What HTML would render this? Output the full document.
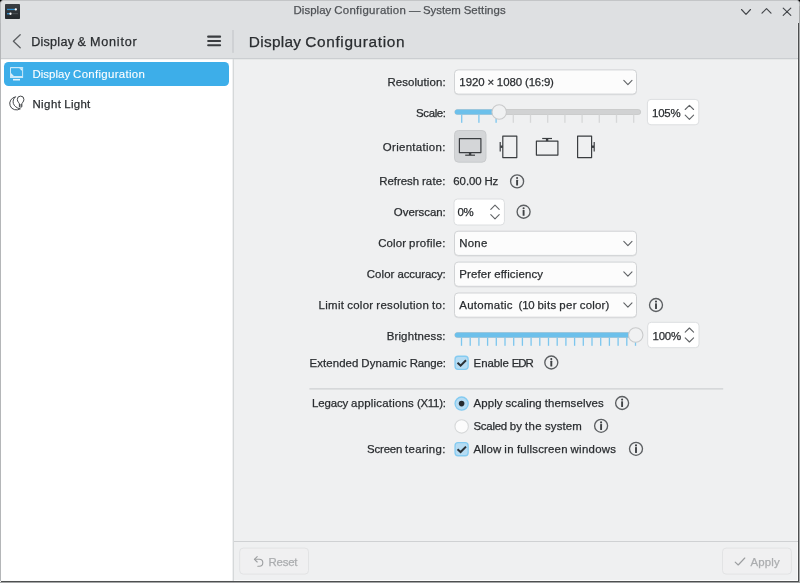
<!DOCTYPE html>
<html><head><meta charset="utf-8"><title>Display Configuration — System Settings</title>
<style>
*{box-sizing:border-box;margin:0;padding:0}
html,body{width:800px;height:583px;overflow:hidden;background:#000}
body{font-family:"Liberation Sans",sans-serif;font-size:11.4px;color:#2a2d30;position:relative}
.abs{position:absolute}
#win{position:absolute;left:0;top:0;width:800px;height:583px;overflow:hidden;will-change:transform}
#titlebar{position:absolute;left:0;top:0;width:800px;height:30px;background:#dee0e2;border:1px solid #c3c5c7;border-left-color:#b8babc;border-right-color:#b8babc;border-radius:3.5px 3.5px 0 0}
#body{position:absolute;left:0;top:23px;width:800px;height:560px;background:#eff0f1}
#toolbar{position:absolute;left:1px;top:23px;width:797px;height:35px;background:#dee0e2}
#tbsep{position:absolute;left:1px;top:58px;width:797px;height:1px;background:#c5c7c9}
#sidebar{position:absolute;left:1px;top:59px;width:232px;height:522px;background:#fff}
#vsep{position:absolute;left:233px;top:59px;width:1px;height:522px;background:#cdcfd1}
#tbvsep{position:absolute;left:233px;top:30px;width:1px;height:23px;background:#c2c4c7}
.t{position:absolute;white-space:nowrap;line-height:16px;-webkit-text-stroke:0.25px}
.w{position:absolute;top:0;left:0;white-space:pre}
.box{position:absolute;background:#fcfcfc;border:1px solid #cfd1d3;border-radius:4px;box-shadow:0 1px 0 rgba(0,0,0,0.06)}
.sp{background:#fff;border-color:#dadcde}
.dis{background:#f0f0f1;border-color:#e3e4e5;box-shadow:none}
#sel{position:absolute;left:4px;top:62px;width:225px;height:24px;background:#3daee9;border-radius:4.5px}
</style></head><body>
<div id="win">
<div id="titlebar"></div>
<div id="body"></div>
<div id="toolbar"></div>
<div id="sidebar"></div>
<div class="abs" style="left:0;top:23px;width:1px;height:558px;background:#b4b6b8"></div>
<div class="abs" style="left:797px;top:59px;width:1px;height:522px;background:#fafafa"></div>
<div class="abs" style="left:797px;top:23px;width:1px;height:36px;background:#e8e9ea"></div>
<div class="abs" style="left:798px;top:23px;width:1px;height:559px;background:#4d4f50"></div>
<div class="abs" style="left:799px;top:6px;width:1px;height:577px;background:#a9abac"></div>
<div class="abs" style="left:1px;top:580px;width:797px;height:1px;background:#fcfcfc"></div>
<div class="abs" style="left:1px;top:581px;width:798px;height:1px;background:#4d4f50"></div>
<div class="abs" style="left:0;top:582px;width:800px;height:1px;background:#a3a5a6"></div>
<div id="sel"></div>
<div class="abs" style="left:234px;top:541px;width:564px;height:1px;background:#cfd1d3"></div>
<svg class="abs" style="left:0;top:0" width="800" height="583" viewBox="0 0 800 583"><rect x="454.5" y="70.60000000000001" width="182.0" height="24.2" rx="3.6" fill="none" stroke="#000" stroke-opacity="0.07" stroke-width="1"/><rect x="454.5" y="69.9" width="182.0" height="24.2" rx="3.6" fill="#fcfcfc" stroke="#d1d3d5" stroke-width="1"/>
<rect x="454.5" y="231.89999999999998" width="182.0" height="24.2" rx="3.6" fill="none" stroke="#000" stroke-opacity="0.07" stroke-width="1"/><rect x="454.5" y="231.2" width="182.0" height="24.2" rx="3.6" fill="#fcfcfc" stroke="#d1d3d5" stroke-width="1"/>
<rect x="454.5" y="262.8" width="182.0" height="24.2" rx="3.6" fill="none" stroke="#000" stroke-opacity="0.07" stroke-width="1"/><rect x="454.5" y="262.1" width="182.0" height="24.2" rx="3.6" fill="#fcfcfc" stroke="#d1d3d5" stroke-width="1"/>
<rect x="454.5" y="293.7" width="182.0" height="24.2" rx="3.6" fill="none" stroke="#000" stroke-opacity="0.07" stroke-width="1"/><rect x="454.5" y="293.0" width="182.0" height="24.2" rx="3.6" fill="#fcfcfc" stroke="#d1d3d5" stroke-width="1"/>
<rect x="647.4" y="99.4" width="51.4" height="25.4" rx="3.6" fill="#fff" stroke="#dcdee0" stroke-width="1"/>
<rect x="454.0" y="199.0" width="50.4" height="26.0" rx="3.6" fill="#fff" stroke="#dcdee0" stroke-width="1"/>
<rect x="647.7" y="322.3" width="51.3" height="25.4" rx="3.6" fill="#fff" stroke="#dcdee0" stroke-width="1"/>
<rect x="239.7" y="548.1" width="68.8" height="26.0" rx="3.6" fill="#f0f0f1" stroke="#e2e3e4" stroke-width="1"/>
<rect x="722.5" y="548.1" width="68.9" height="26.0" rx="3.6" fill="#f0f0f1" stroke="#e2e3e4" stroke-width="1"/>
<rect x="309.4" y="388.4" width="413.8" height="1" fill="#c6c8ca"/>
<rect x="1" y="58.2" width="797" height="1" fill="#c3c6c9"/>
<rect x="232.7" y="59.2" width="1" height="521.8" fill="#cbcdcf"/>
<rect x="232.5" y="30" width="1" height="22.8" fill="#bfc2c5"/></svg>
<div class="t" style="left:293.53px;top:2.34px;font-size:11.43px;width:214.3px;height:16px;color:#4f5256"><span class="w" style="left:0.00px;letter-spacing:0.056px">Display</span> <span class="w" style="left:40.73px;letter-spacing:0.309px">Configuration</span> <span class="w" style="left:115.58px;letter-spacing:-0.312px">—</span> <span class="w" style="left:129.55px;letter-spacing:-0.065px">System</span> <span class="w" style="left:170.12px;letter-spacing:0.117px">Settings</span></div>
<div class="t" style="left:31.20px;top:34.13px;font-size:12.62px;width:108.3px;height:16px"><span class="w" style="left:0.00px;letter-spacing:0.237px">Display</span> <span class="w" style="left:46.30px;letter-spacing:0.812px">&amp;</span> <span class="w" style="left:58.81px;letter-spacing:0.779px">Monitor</span></div>
<div class="t" style="left:248.80px;top:34.36px;font-size:15.4px;width:158.3px;height:16px"><span class="w" style="left:0.00px;letter-spacing:0.29px">Display</span> <span class="w" style="left:56.50px;letter-spacing:0.636px">Configuration</span></div>
<div class="t" style="left:32.40px;top:66.34px;font-size:11.43px;width:114.7px;height:16px;color:#fff;-webkit-text-stroke:0.1px"><span class="w" style="left:0.00px;letter-spacing:0.056px">Display</span> <span class="w" style="left:40.73px;letter-spacing:0.309px">Configuration</span></div>
<div class="t" style="left:32.40px;top:95.54px;font-size:11.43px;width:60.2px;height:16px"><span class="w" style="left:0.00px;letter-spacing:0.463px">Night</span> <span class="w" style="left:31.88px;letter-spacing:0.316px">Light</span></div>
<div class="t" style="left:387.39px;top:74.24px;font-size:11.43px;width:60.3px;height:16px"><span class="w" style="left:0.00px;letter-spacing:0.105px">Resolution:</span></div>
<div class="t" style="left:459.30px;top:74.24px;font-size:11.43px;width:96.4px;height:16px"><span class="w" style="left:0.00px;letter-spacing:-0.008px">1920</span> <span class="w" style="left:28.28px;letter-spacing:-0.312px">×</span> <span class="w" style="left:37.50px;letter-spacing:-0.008px">1080</span> <span class="w" style="left:65.77px;letter-spacing:-0.195px">(16:9)</span></div>
<div class="t" style="left:415.97px;top:104.64px;font-size:11.43px;width:31.7px;height:16px"><span class="w" style="left:0.00px;letter-spacing:-0.336px">Scale:</span></div>
<div class="t" style="left:652.10px;top:104.64px;font-size:11.43px;width:30.3px;height:16px"><span class="w" style="left:0.00px;letter-spacing:-0.238px">105%</span></div>
<div class="t" style="left:382.84px;top:138.64px;font-size:11.43px;width:64.9px;height:16px"><span class="w" style="left:0.00px;letter-spacing:0.318px">Orientation:</span></div>
<div class="t" style="left:379.23px;top:173.04px;font-size:11.43px;width:68.5px;height:16px"><span class="w" style="left:0.00px;letter-spacing:-0.033px">Refresh</span> <span class="w" style="left:42.66px;letter-spacing:0.194px">rate:</span></div>
<div class="t" style="left:453.30px;top:173.04px;font-size:11.43px;width:46.7px;height:16px"><span class="w" style="left:0.00px;letter-spacing:-0.047px">60.00</span> <span class="w" style="left:31.25px;letter-spacing:-0.266px">Hz</span></div>
<div class="t" style="left:393.86px;top:204.04px;font-size:11.43px;width:53.8px;height:16px"><span class="w" style="left:0.00px;letter-spacing:-0.024px">Overscan:</span></div>
<div class="t" style="left:457.50px;top:204.04px;font-size:11.43px;width:17.6px;height:16px"><span class="w" style="left:0.00px;letter-spacing:-0.469px">0%</span></div>
<div class="t" style="left:378.26px;top:235.24px;font-size:11.43px;width:69.4px;height:16px"><span class="w" style="left:0.00px;letter-spacing:0.119px">Color</span> <span class="w" style="left:30.77px;letter-spacing:0.297px">profile:</span></div>
<div class="t" style="left:459.30px;top:235.24px;font-size:11.43px;width:30.3px;height:16px"><span class="w" style="left:0.00px;letter-spacing:0.238px">None</span></div>
<div class="t" style="left:366.65px;top:266.14px;font-size:11.43px;width:81.0px;height:16px"><span class="w" style="left:0.00px;letter-spacing:0.119px">Color</span> <span class="w" style="left:30.77px;letter-spacing:-0.068px">accuracy:</span></div>
<div class="t" style="left:459.30px;top:266.14px;font-size:11.43px;width:85.9px;height:16px"><span class="w" style="left:0.00px;letter-spacing:0.146px">Prefer</span> <span class="w" style="left:34.88px;letter-spacing:0.164px">efficiency</span></div>
<div class="t" style="left:318.45px;top:297.14px;font-size:11.43px;width:129.2px;height:16px"><span class="w" style="left:0.00px;letter-spacing:0.359px">Limit</span> <span class="w" style="left:28.81px;letter-spacing:0.287px">color</span> <span class="w" style="left:57.89px;letter-spacing:0.327px">resolution</span> <span class="w" style="left:113.56px;letter-spacing:0.333px">to:</span></div>
<div class="t" style="left:459.30px;top:297.14px;font-size:11.43px;width:152.1px;height:16px"><span class="w" style="left:0.00px;letter-spacing:0.295px">Automatic</span> <span class="w" style="left:59.23px;letter-spacing:-0.161px">(10</span> <span class="w" style="left:78.12px;letter-spacing:0.309px">bits</span> <span class="w" style="left:100.02px;letter-spacing:0.385px">per</span> <span class="w" style="left:120.56px;letter-spacing:0.161px">color)</span></div>
<div class="t" style="left:386.64px;top:327.54px;font-size:11.43px;width:61.1px;height:16px"><span class="w" style="left:0.00px;letter-spacing:0.175px">Brightness:</span></div>
<div class="t" style="left:652.60px;top:327.54px;font-size:11.43px;width:30.3px;height:16px"><span class="w" style="left:0.00px;letter-spacing:-0.238px">100%</span></div>
<div class="t" style="left:309.43px;top:355.04px;font-size:11.43px;width:138.3px;height:16px"><span class="w" style="left:0.00px;letter-spacing:0.1px">Extended</span> <span class="w" style="left:51.95px;letter-spacing:0.138px">Dynamic</span> <span class="w" style="left:100.23px;letter-spacing:-0.133px">Range:</span></div>
<div class="t" style="left:473.60px;top:355.04px;font-size:11.43px;width:61.2px;height:16px"><span class="w" style="left:0.00px;letter-spacing:-0.062px">Enable</span> <span class="w" style="left:38.08px;letter-spacing:-0.984px">EDR</span></div>
<div class="t" style="left:312.11px;top:395.24px;font-size:11.43px;width:135.6px;height:16px"><span class="w" style="left:0.00px;letter-spacing:-0.122px">Legacy</span> <span class="w" style="left:38.98px;letter-spacing:0.215px">applications</span> <span class="w" style="left:104.77px;letter-spacing:-0.24px">(X11):</span></div>
<div class="t" style="left:473.40px;top:395.24px;font-size:11.43px;width:132.4px;height:16px"><span class="w" style="left:0.00px;letter-spacing:0.138px">Apply</span> <span class="w" style="left:32.14px;letter-spacing:0.103px">scaling</span> <span class="w" style="left:71.30px;letter-spacing:0.136px">themselves</span></div>
<div class="t" style="left:473.40px;top:418.04px;font-size:11.43px;width:110.5px;height:16px"><span class="w" style="left:0.00px;letter-spacing:-0.224px">Scaled</span> <span class="w" style="left:36.47px;letter-spacing:0.094px">by</span> <span class="w" style="left:51.61px;letter-spacing:0.411px">the</span> <span class="w" style="left:71.62px;letter-spacing:0.122px">system</span></div>
<div class="t" style="left:367.07px;top:441.44px;font-size:11.43px;width:80.6px;height:16px"><span class="w" style="left:0.00px;letter-spacing:-0.174px">Screen</span> <span class="w" style="left:38.03px;letter-spacing:0.311px">tearing:</span></div>
<div class="t" style="left:473.40px;top:441.44px;font-size:11.43px;width:145.0px;height:16px"><span class="w" style="left:0.00px;letter-spacing:0.147px">Allow</span> <span class="w" style="left:30.92px;letter-spacing:0.414px">in</span> <span class="w" style="left:43.52px;letter-spacing:0.188px">fullscreen</span> <span class="w" style="left:97.17px;letter-spacing:0.283px">windows</span></div>
<div class="t" style="left:268.50px;top:553.84px;font-size:11.43px;width:30.7px;height:16px;color:#abadaf"><span class="w" style="left:0.00px;letter-spacing:-0.222px">Reset</span></div>
<div class="t" style="left:750.60px;top:553.84px;font-size:11.43px;width:31.3px;height:16px;color:#abadaf"><span class="w" style="left:0.00px;letter-spacing:0.138px">Apply</span></div>
<svg class="abs" style="left:0;top:0" width="800" height="583" viewBox="0 0 800 583"><defs><linearGradient id="ig" x1="0" y1="0" x2="0" y2="1"><stop offset="0" stop-color="#3a3f44"/><stop offset="1" stop-color="#25292d"/></linearGradient></defs>
<rect x="5" y="4" width="15" height="15" rx="0.8" fill="url(#ig)"/>
<rect x="7" y="8.8" width="8.5" height="1.3" fill="#2f8fd0"/><circle cx="15.8" cy="9.45" r="1.15" fill="#fff"/>
<rect x="7" y="13.1" width="3" height="1.3" fill="#2f8fd0"/><circle cx="10.5" cy="13.75" r="1.15" fill="#fff"/><rect x="12.3" y="13.4" width="5.7" height="0.7" fill="#5a5f64"/>
<path d="M741.50 9.50 L746.00 14.30 L750.50 9.50" fill="none" stroke="#43464a" stroke-width="1.15" stroke-linecap="round" stroke-linejoin="round"/>
<path d="M762.00 13.20 L766.50 8.60 L771.00 13.20" fill="none" stroke="#43464a" stroke-width="1.15" stroke-linecap="round" stroke-linejoin="round"/>
<path d="M783.2 8.2 L790.8 15.3 M790.8 8.2 L783.2 15.3" stroke="#43464a" stroke-width="1.15" fill="none" stroke-linecap="round"/>
<path d="M20.2 34.8 L13.4 41.3 L20.2 47.8" fill="none" stroke="#5c5f62" stroke-width="1.3" stroke-linecap="round" stroke-linejoin="round"/>
<rect x="207.1" y="35.550000000000004" width="14" height="2.1" rx="1" fill="#3a3d40"/>
<rect x="207.1" y="39.95" width="14" height="2.1" rx="1" fill="#3a3d40"/>
<rect x="207.1" y="44.25" width="14" height="2.1" rx="1" fill="#3a3d40"/>
<rect x="10" y="67.1" width="13.1" height="11" rx="0.4" fill="#fff" fill-opacity="0.72"/>
<rect x="11" y="68.2" width="11.1" height="7.8" fill="#3daee9"/>
<path d="M19.2 68.2 L22.1 68.2 L22.1 71.1 Z M11 73.1 L13.9 76 L11 76 Z" fill="#fff" fill-opacity="0.8"/>
<rect x="13" y="78.9" width="7" height="1.6" fill="#fff" fill-opacity="0.85"/>
<g fill="none" stroke="#3a3d40" stroke-width="0.95" stroke-linecap="round" stroke-linejoin="round"><path d="M15.3 96.9 A6.6 6.6 0 1 0 20.0 108.9"/><path d="M15.3 96.9 C11.2 100.5 12.5 107.0 20.0 108.9"/><path d="M19.4 106.6 V103.9 C19.4 102.9 17.3 101.9 17.3 99.4 A3.3 3.3 0 0 1 23.9 99.4 C23.9 101.9 21.8 102.9 21.8 103.9 V106.6 Z" fill="#fff"/><path d="M19.4 105.0 H21.8"/></g>
<path d="M623.80 80.35 L627.90 84.65 L632.00 80.35" fill="none" stroke="#606366" stroke-width="1.1" stroke-linecap="round" stroke-linejoin="round"/>
<path d="M623.80 241.35 L627.90 245.65 L632.00 241.35" fill="none" stroke="#606366" stroke-width="1.1" stroke-linecap="round" stroke-linejoin="round"/>
<path d="M623.80 271.85 L627.90 276.15 L632.00 271.85" fill="none" stroke="#606366" stroke-width="1.1" stroke-linecap="round" stroke-linejoin="round"/>
<path d="M623.80 302.85 L627.90 307.15 L632.00 302.85" fill="none" stroke="#606366" stroke-width="1.1" stroke-linecap="round" stroke-linejoin="round"/>
<rect x="454.8" y="109.5" width="185.90000000000003" height="5" rx="2.5" fill="#d1d2d3" stroke="#c5c6c7" stroke-width="0.8"/><rect x="454.8" y="109.5" width="44.39999999999998" height="5" rx="2.5" fill="#6cc0eb"/><rect x="461.05" y="114.6" width="1.3" height="8.2" fill="#7cc6ee"/><rect x="478.25" y="114.6" width="1.3" height="8.2" fill="#7cc6ee"/><rect x="495.45" y="114.6" width="1.3" height="8.2" fill="#7cc6ee"/><rect x="512.65" y="114.6" width="1.3" height="8.2" fill="#d6d7d8"/><rect x="529.85" y="114.6" width="1.3" height="8.2" fill="#d6d7d8"/><rect x="547.05" y="114.6" width="1.3" height="8.2" fill="#d6d7d8"/><rect x="564.25" y="114.6" width="1.3" height="8.2" fill="#d6d7d8"/><rect x="581.45" y="114.6" width="1.3" height="8.2" fill="#d6d7d8"/><rect x="598.65" y="114.6" width="1.3" height="8.2" fill="#d6d7d8"/><rect x="615.85" y="114.6" width="1.3" height="8.2" fill="#d6d7d8"/><rect x="633.05" y="114.6" width="1.3" height="8.2" fill="#d6d7d8"/><circle cx="499.2" cy="112.0" r="7.25" fill="#f0f1f2" stroke="#c9cacb" stroke-width="1.1"/>
<rect x="454.8" y="332.5" width="185.90000000000003" height="5" rx="2.5" fill="#d1d2d3" stroke="#c5c6c7" stroke-width="0.8"/><rect x="454.8" y="332.5" width="180.90000000000003" height="5" rx="2.5" fill="#6cc0eb"/><rect x="460.85" y="337.6" width="1.3" height="8.2" fill="#7cc6ee"/><rect x="469.55" y="337.6" width="1.3" height="8.2" fill="#7cc6ee"/><rect x="478.25" y="337.6" width="1.3" height="8.2" fill="#7cc6ee"/><rect x="486.95" y="337.6" width="1.3" height="8.2" fill="#7cc6ee"/><rect x="495.65" y="337.6" width="1.3" height="8.2" fill="#7cc6ee"/><rect x="504.35" y="337.6" width="1.3" height="8.2" fill="#7cc6ee"/><rect x="513.05" y="337.6" width="1.3" height="8.2" fill="#7cc6ee"/><rect x="521.75" y="337.6" width="1.3" height="8.2" fill="#7cc6ee"/><rect x="530.45" y="337.6" width="1.3" height="8.2" fill="#7cc6ee"/><rect x="539.15" y="337.6" width="1.3" height="8.2" fill="#7cc6ee"/><rect x="547.85" y="337.6" width="1.3" height="8.2" fill="#7cc6ee"/><rect x="556.55" y="337.6" width="1.3" height="8.2" fill="#7cc6ee"/><rect x="565.25" y="337.6" width="1.3" height="8.2" fill="#7cc6ee"/><rect x="573.95" y="337.6" width="1.3" height="8.2" fill="#7cc6ee"/><rect x="582.65" y="337.6" width="1.3" height="8.2" fill="#7cc6ee"/><rect x="591.35" y="337.6" width="1.3" height="8.2" fill="#7cc6ee"/><rect x="600.05" y="337.6" width="1.3" height="8.2" fill="#7cc6ee"/><rect x="608.75" y="337.6" width="1.3" height="8.2" fill="#7cc6ee"/><rect x="617.45" y="337.6" width="1.3" height="8.2" fill="#7cc6ee"/><rect x="626.15" y="337.6" width="1.3" height="8.2" fill="#7cc6ee"/><rect x="634.85" y="337.6" width="1.3" height="8.2" fill="#7cc6ee"/><circle cx="635.7" cy="335.0" r="7.25" fill="#f0f1f2" stroke="#c9cacb" stroke-width="1.1"/>
<path d="M685.20 109.50 L689.40 105.30 L693.60 109.50" fill="none" stroke="#606366" stroke-width="1.1" stroke-linecap="round" stroke-linejoin="round"/>
<path d="M685.20 115.10 L689.40 119.30 L693.60 115.10" fill="none" stroke="#606366" stroke-width="1.1" stroke-linecap="round" stroke-linejoin="round"/>
<path d="M685.20 332.20 L689.40 328.00 L693.60 332.20" fill="none" stroke="#606366" stroke-width="1.1" stroke-linecap="round" stroke-linejoin="round"/>
<path d="M685.20 337.80 L689.40 342.00 L693.60 337.80" fill="none" stroke="#606366" stroke-width="1.1" stroke-linecap="round" stroke-linejoin="round"/>
<path d="M490.80 209.40 L495.00 205.20 L499.20 209.40" fill="none" stroke="#606366" stroke-width="1.1" stroke-linecap="round" stroke-linejoin="round"/>
<path d="M490.80 214.60 L495.00 218.80 L499.20 214.60" fill="none" stroke="#606366" stroke-width="1.1" stroke-linecap="round" stroke-linejoin="round"/>
<rect x="454.5" y="130.5" width="31.5" height="31.7" rx="4" fill="#d4d6d8" stroke="#c9cbcd" stroke-width="1"/>
<g stroke="#3a3d40" stroke-width="1.2" fill="none" stroke-linejoin="round"><rect x="459.4" y="138.6" width="21.5" height="14"/><path d="M465.2 155.2 H475"/><rect x="468.9" y="152.6" width="2.4" height="2.4" fill="#3a3d40" stroke="none"/></g>
<g stroke="#3a3d40" stroke-width="1.2" fill="none" stroke-linejoin="round"><rect x="502.8" y="136.1" width="14" height="21.5"/><path d="M500.2 142 V151.6"/><rect x="500.4" y="145.5" width="2.4" height="2.4" fill="#3a3d40" stroke="none"/></g>
<g stroke="#3a3d40" stroke-width="1.2" fill="none" stroke-linejoin="round"><rect x="536.4" y="141.1" width="21.5" height="14"/><path d="M542.2 138.5 H552"/><rect x="545.9" y="138.7" width="2.4" height="2.4" fill="#3a3d40" stroke="none"/></g>
<g stroke="#3a3d40" stroke-width="1.2" fill="none" stroke-linejoin="round"><rect x="577.6" y="136.1" width="14" height="21.5"/><path d="M594.2 142 V151.6"/><rect x="591.6" y="145.5" width="2.4" height="2.4" fill="#3a3d40" stroke="none"/></g>
<circle cx="517.1" cy="181.4" r="6.5" fill="none" stroke="#5c5f62" stroke-width="1.35"/><circle cx="517.1" cy="178.0" r="1.05" fill="#3f4245"/><rect x="516.15" y="179.70000000000002" width="1.9" height="5.8" rx="0.5" fill="#3f4245"/>
<circle cx="523.6" cy="211.7" r="6.5" fill="none" stroke="#5c5f62" stroke-width="1.35"/><circle cx="523.6" cy="208.29999999999998" r="1.05" fill="#3f4245"/><rect x="522.65" y="210.0" width="1.9" height="5.8" rx="0.5" fill="#3f4245"/>
<circle cx="656.0" cy="305.0" r="6.5" fill="none" stroke="#5c5f62" stroke-width="1.35"/><circle cx="656.0" cy="301.6" r="1.05" fill="#3f4245"/><rect x="655.05" y="303.3" width="1.9" height="5.8" rx="0.5" fill="#3f4245"/>
<circle cx="551.3" cy="362.5" r="6.5" fill="none" stroke="#5c5f62" stroke-width="1.35"/><circle cx="551.3" cy="359.1" r="1.05" fill="#3f4245"/><rect x="550.3499999999999" y="360.8" width="1.9" height="5.8" rx="0.5" fill="#3f4245"/>
<circle cx="622.1" cy="403.0" r="6.5" fill="none" stroke="#5c5f62" stroke-width="1.35"/><circle cx="622.1" cy="399.6" r="1.05" fill="#3f4245"/><rect x="621.15" y="401.3" width="1.9" height="5.8" rx="0.5" fill="#3f4245"/>
<circle cx="601.1" cy="425.8" r="6.5" fill="none" stroke="#5c5f62" stroke-width="1.35"/><circle cx="601.1" cy="422.40000000000003" r="1.05" fill="#3f4245"/><rect x="600.15" y="424.1" width="1.9" height="5.8" rx="0.5" fill="#3f4245"/>
<circle cx="636.0" cy="448.8" r="6.5" fill="none" stroke="#5c5f62" stroke-width="1.35"/><circle cx="636.0" cy="445.40000000000003" r="1.05" fill="#3f4245"/><rect x="635.05" y="447.1" width="1.9" height="5.8" rx="0.5" fill="#3f4245"/>
<rect x="455.04999999999995" y="356.25" width="13.1" height="13.1" rx="3" fill="#b6dcf3" stroke="#84cbf1" stroke-width="1.3"/><path d="M457.5 362.8 L460.59999999999997 365.6 L466.0 360.20000000000005" fill="none" stroke="#2b3035" stroke-width="2" stroke-linecap="butt" stroke-linejoin="miter"/>
<rect x="455.04999999999995" y="442.65" width="13.1" height="13.1" rx="3" fill="#b6dcf3" stroke="#84cbf1" stroke-width="1.3"/><path d="M457.5 449.2 L460.59999999999997 452.0 L466.0 446.6" fill="none" stroke="#2b3035" stroke-width="2" stroke-linecap="butt" stroke-linejoin="miter"/>
<circle cx="461.65" cy="403.6" r="6.6" fill="#b6dcf3" stroke="#84cbf1" stroke-width="1.3"/><circle cx="461.6" cy="403.6" r="2.8" fill="#25292d"/>
<circle cx="461.65" cy="426.4" r="6.7" fill="#fcfcfc" stroke="#d6d8d9" stroke-width="1.1"/>
<g fill="none" stroke="#9c9ea0" stroke-width="1.1" stroke-linecap="round" stroke-linejoin="round"><path d="M257.2 556.6 L254.4 559.3 L257.2 562.0"/><path d="M254.8 559.3 H259.3 A3.5 3.5 0 0 1 259.3 566.3 H257.8"/></g>
<path d="M735.2 562.2 L738.2 565.0 L744.8 558.0" fill="none" stroke="#9c9ea0" stroke-width="1.15" stroke-linecap="round" stroke-linejoin="round"/></svg>
</div>
</body></html>
